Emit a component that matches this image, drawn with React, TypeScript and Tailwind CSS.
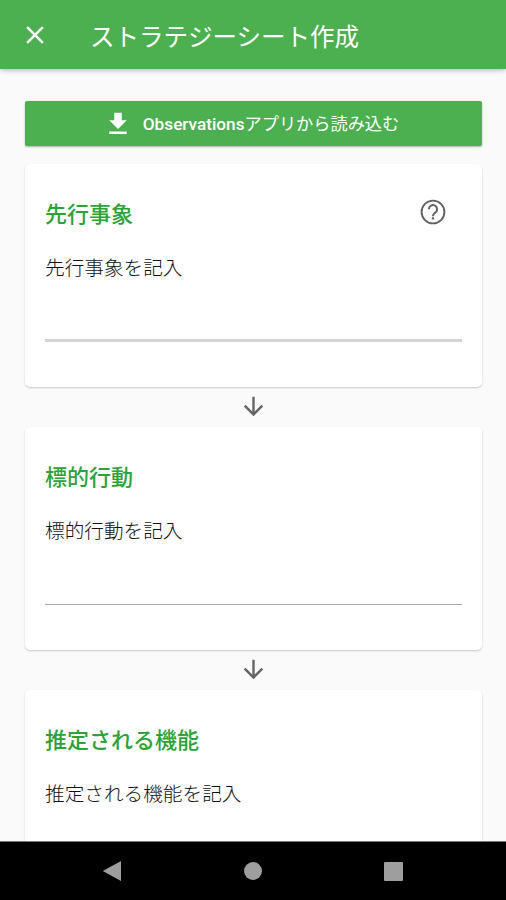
import React from "react";
import { MdArrowDownward, MdClose, MdFileDownload } from "react-icons/md";

const HelpIcon: React.FC = () => (
    <svg className="h-[26px] w-[26px] text-[#616161]" viewBox="0 0 26 26" fill="none" stroke="currentColor">
        <circle cx="13" cy="13" r="11.4" strokeWidth="1.9" />
        <path d="M8.9 10.2a4.1 4.1 0 1 1 6.9 3c-1.5 1.3-2.8 1.9-2.8 4" strokeWidth="2" />
        <path d="M13 18.3v2.1" strokeWidth="2.2" />
    </svg>
);

const DownArrow: React.FC = () => (
    <div className="flex h-10 shrink-0 items-center justify-center">
        <MdArrowDownward className="h-[29px] w-[29px] text-[#666]" />
    </div>
);

type SheetCardProps = {
    title: string;
    placeholder: string;
    hasHelp?: boolean;
    lineClass?: string;
};

const SheetCard: React.FC<SheetCardProps> = ({ title, placeholder, hasHelp, lineClass }) => (
    <section className="h-[223.2px] shrink-0 rounded-[5px] bg-white px-5 pt-[35px] shadow-[0_1px_2px_rgba(0,0,0,0.2)]">
        <div className="flex h-[30px] items-center justify-between pr-4">
            <h2 className="pt-0.5 text-[22px] font-medium leading-[30px] text-[#2ba336]">{title}</h2>
            {hasHelp && (
                <button aria-label="ヘルプ" className="mb-[3px]">
                    <HelpIcon />
                </button>
            )}
        </div>
        <div className={`mt-[25px] h-[88px] ${lineClass ?? "border-b border-[#a8a8a8]"}`}>
            <p className="text-[19.65px] font-light leading-[30px] text-[#111]">{placeholder}</p>
        </div>
    </section>
);

export default function App() {
    return (
        <div className="flex h-[900px] w-[506px] flex-col overflow-hidden bg-[#fafafa] font-[Roboto,'Noto_Sans_CJK_JP',sans-serif]">
            {/* App bar */}
            <header className="z-10 flex h-[69px] shrink-0 items-center bg-[#4caf50] pl-5 text-white shadow-[0_1px_5px_rgba(0,0,0,0.3)]">
                <button aria-label="閉じる">
                    <MdClose className="h-[30px] w-[30px]" />
                </button>
                <h1 className="ml-10 pt-1.5 text-[24.5px] leading-[36px]">ストラテジーシート作成</h1>
            </header>

            <main className="flex min-h-0 flex-1 flex-col overflow-hidden pl-[25px] pr-6 pt-8">
                <button className="mb-[17.5px] flex h-[45px] shrink-0 items-center justify-center rounded-[2px] bg-[#4caf50] pr-[5px] text-white shadow-[0_1px_2px_rgba(0,0,0,0.3)]">
                    <MdFileDownload className="mr-2.5 h-[30px] w-[30px]" />
                    <span className="pt-0.5 text-[17.2px]">
                        <span className="font-medium">Observations</span>アプリから読み込む
                    </span>
                </button>

                <SheetCard
                    title="先行事象"
                    placeholder="先行事象を記入"
                    hasHelp
                    lineClass="border-b-3 border-[#d4d4d4]"
                />
                <DownArrow />
                <SheetCard title="標的行動" placeholder="標的行動を記入" />
                <DownArrow />
                <SheetCard title="推定される機能" placeholder="推定される機能を記入" />
            </main>

            {/* System navigation */}
            <nav className="z-10 flex h-[59px] shrink-0 items-center justify-between border-t border-[#777] bg-black pl-[102px] pr-[103px] text-[#9e9e9e]">
                <svg className="h-5 w-5" viewBox="0 0 20 20" fill="currentColor">
                    <path d="M.8 10 19 0v20z" />
                </svg>
                <span className="h-[18px] w-[18px] rounded-full bg-[#9e9e9e]" />
                <span className="h-[19px] w-[19px] rounded-[1px] bg-[#9e9e9e]" />
            </nav>
        </div>
    );
}
